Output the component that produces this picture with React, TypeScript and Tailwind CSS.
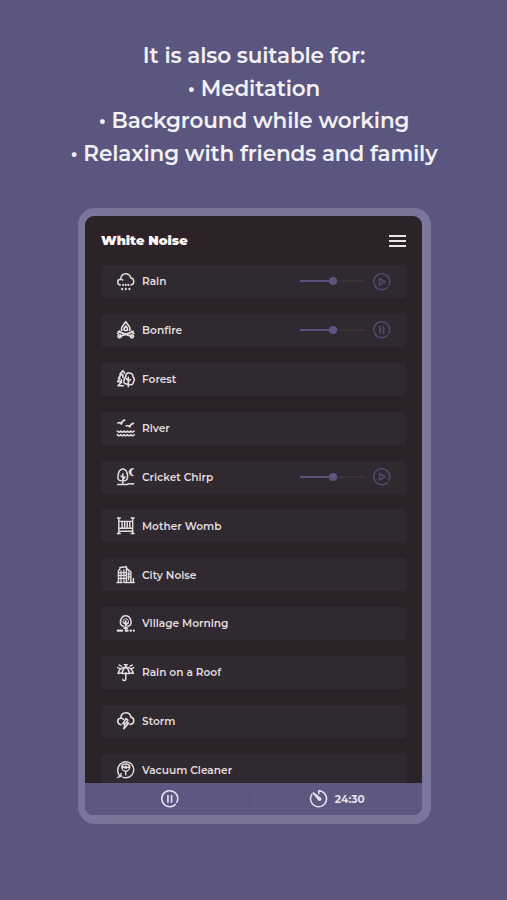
import type { ReactNode } from "react";

function Icon({ children, className = "", width = 1.8 }: { children: ReactNode; className?: string; width?: number }) {
  return (
    <svg
      viewBox="0 0 24 24"
      className={`size-[17.500px] shrink-0 overflow-visible ${className}`}
      fill="none"
      stroke="currentColor"
      strokeWidth={width}
      strokeLinecap="round"
      strokeLinejoin="round"
    >
      {children}
    </svg>
  );
}

const icons = {
  rain: (
    <Icon width={2}>
      <path d="M4.500 16.500C2 16 .8 14 1 12c.2-2 1.800-3.300 3.800-3.400L8 9.500M4.800 8.600C5.500 4 8.500 1 12 1c3.600 0 6 2.200 6.700 5.500 2.600.5 4.300 2.400 4.300 5s-1.400 4.500-4 5" />
      <path d="M8.500 16v.5M12 16v.5M15.500 16v.5M7 21.700v.5M12 21.700v.5M17 21.700v.5" strokeWidth="2.800" />
    </Icon>
  ),
  bonfire: (
    <Icon width={2.200}>
      <path d="M7 13C3.500 9 9 6 12 1c3 5 8.500 8 5 12M12 7c-2.500 2-3 4-1.700 6h3.400c1.300-2 .8-4-1.700-6Z" />
      <path d="m2 14.500 18 6.500M22 14.500 4 21M1 17l3-3M23 17l-3-3" strokeWidth="2.600" />
      <circle cx="3.500" cy="21" r="2.200" />
      <circle cx="20.500" cy="21" r="2.200" />
    </Icon>
  ),
  forest: (
    <Icon width={2.2}>
      <path d="M10.500 4 8 1 4 6h2l-4 5h2l-3 5h4M5 18l-3.500 3.500H9M8 6v4M6 13v4" />
      <path d="M12 19c-3-.8-3.500-3.500-2-5-1-2.500.5-4 2-4.500C11.500 5 15 2.500 17.500 4.500c3-.5 4.500 2 4.500 5 2.500 2.500 2 5.500.5 7 0 3-2.500 4.500-5.500 3.500M15.500 23V10m0 6 3-3m-3 1-3-2M12 19l3 1" />
    </Icon>
  ),
  river: (
    <Icon width={2.200}>
      <path d="M1 5.500c2-1 4-.5 5 1.500C6.500 4 8 2 10.500 1.500M12.500 9.500c2-1 4-.5 5 1.500.5-3 2-4.500 5-5" />
      <path d="M.5 16.500c1.500 2 3 2 4.600 0 1.500 2 3 2 4.600 0 1.500 2 3 2 4.600 0 1.500 2 3 2 4.600 0 1.500 2 3 2 4.600 0M.5 21.500c1.500 2 3 2 4.600 0 1.500 2 3 2 4.600 0 1.500 2 3 2 4.600 0 1.500 2 3 2 4.600 0 1.500 2 3 2 4.600 0" />
    </Icon>
  ),
  cricket: (
    <Icon width={2.100}>
      <path d="M6 17.500c-4 0-5.500-3-4.500-6.500C2 5.500 4 1.500 8 1.500s6 4 6.500 9.500c.5 3.500-1.500 6.500-4.500 6.500M8 22V8m0 8 3-4M8 13l-2.500-2M1 22.500h13c2-2.500 5 .5 9-1" />
      <path d="M22.500 1c-4-.8-6 1.700-6 4.500s2.500 6 6.500 5c-2.500-1-3.500-2.500-3.500-4.500s1-4 3-5Z" fill="currentColor" strokeWidth="1" />
    </Icon>
  ),
  crib: (
    <Icon width={2}>
      <path d="M2.500 1v22M21.500 1v22M.5 1.500h4M19.500 1.500h4M.5 22.500h4M19.500 22.500h4M3 6h18M3 15.500h18M3 19.500h18M7 6v9M10.500 6v9M14 6v9M17.500 6v9" />
    </Icon>
  ),
  city: (
    <Icon width={2}>
      <path d="M2 22V6.500L4 4V2l9-1v21M13 3l6 5v14M0 22.500h7M10 22.500h13.500M22.500 22v-5" />
      <path d="M5.500 6.500v15.500M9.500 5v17M2 9h10M2 13h10M2 17h10M16 8v11M15 11h3M15 15h3" strokeWidth="1.700" />
    </Icon>
  ),
  village: (
    <Icon width={2.200}>
      <path d="M9 15.500C5 15 3.800 11 5 7.500 6 4 8.500 1 12 1s6 3 7 6.500c1.200 3.500 0 7.500-4 8M12 20V8m0 6 3-3m-3 2-3-3" />
      <path d="M8.500 11c-1-3 .5-6 3.500-6s4.500 3 3.500 6" strokeWidth="1.300" />
      <path d="M9.500 18h5" />
      <path d="M1 21.500h6M12 21.500h2.500M18.500 21.500h.5M23 21.500h.1" strokeWidth="3" />
    </Icon>
  ),
  umbrella: (
    <Icon width={2.100}>
      <path d="M1.500 13C2.500 8 6.500 4.500 12 4.500S21.500 8 22.500 13c-2-1-4-1-5.500 0H7c-1.500-1-3.500-1-5.500 0ZM7 13c.5-4 2-7 5-8.500 3 1.500 4.500 4.500 5 8.500M12 12v9c0 2.500-4 2.500-4 0M12 5V2.500M1 5l2.500 1M3 1.500l3 1.500M10 1h4M21 1.500 18 3M23 5l-2.500 1" />
    </Icon>
  ),
  storm: (
    <Icon width={2.200}>
      <path d="M5.500 17.500C2 17 1 14.500 1 12.500 1 10.500 2.500 8.500 5 8.500 5.500 4 8.500 1 12 1c4 0 6.500 2.500 7 6 2.500.3 4 2.500 4 5s-1.800 4.700-5 5M5 8.500c2-.2 3 .5 4 1.500" />
      <path d="m12.500 9-4.500 7h3L9.500 23l6.500-8h-3.500L15 11Z" />
    </Icon>
  ),
  vacuum: (
    <Icon width={2}>
      <path d="M5 21C2.500 19.500 1 16 1 12.500 1 6.500 6 1 12 1s11 5 11 11-5 11-11 11c-1.500 0-3-.3-4-.8M1 22.500l4.500-1.500V17" />
      <path d="M6.500 7.500C7 5 9 4 12 4s5 1 5.500 3.500c0 3-2 6.500-5.500 6.500s-5.500-3.500-5.500-6.500Zm0 0c3 2 8 2 11 0M12 14v5" />
      <circle cx="12" cy="8.500" r="1.300" />
    </Icon>
  ),
};

function PlayerIcon({ playing, className = "" }: { playing?: boolean; className?: string }) {
  return (
    <Icon className={className} width={2.100}>
      <path d="M19.500 20A11 11 0 1 1 23 12.500c-.1 1.800-.6 3.200-1.500 4.500M19.500 20c-1.800 1.700-3.800 2.700-6 3" />
      {playing ? <path d="M9.500 7.500v9M14.500 7.500v9" strokeWidth="2.300" /> : <path d="M9 7.500v9l7.500-4.500Z" />}
    </Icon>
  );
}

type Control = "play" | "pause";
const sounds: { name: string; icon: ReactNode; control?: Control }[] = [
  { name: "Rain", icon: icons.rain, control: "play" },
  { name: "Bonfire", icon: icons.bonfire, control: "pause" },
  { name: "Forest", icon: icons.forest },
  { name: "River", icon: icons.river },
  { name: "Cricket Chirp", icon: icons.cricket, control: "play" },
  { name: "Mother Womb", icon: icons.crib },
  { name: "City Noise", icon: icons.city },
  { name: "Village Morning", icon: icons.village },
  { name: "Rain on a Roof", icon: icons.umbrella },
  { name: "Storm", icon: icons.storm },
  { name: "Vacuum Cleaner", icon: icons.vacuum },
];

function Slider() {
  return (
    <div className="flex w-[65px] items-center">
      <div className="h-[2px] w-[29px] bg-[#57507c]" />
      <div className="size-2 rounded-full bg-[#5d5685]" />
      <div className="h-[2px] flex-1 bg-[#3b3138]" />
    </div>
  );
}

export default function App() {
  return (
    <main className="flex h-[900px] w-[507px] flex-col bg-[#5a567f] font-['Montserrat','Inter',sans-serif] text-[#f3f0f5]">
      <h1 className="flex h-[208px] shrink-0 flex-col items-center pt-[39px] pl-px text-[21.500px] leading-[32.600px] font-semibold tracking-[-0.120px] whitespace-nowrap">
        <span>It is also suitable for:</span>
        <span>• Meditation</span>
        <span>• Background while working</span>
        <span>• Relaxing with friends and family</span>
      </h1>
      <section className="ml-[78px] flex h-[616px] w-[353px] flex-col overflow-hidden rounded-[17px] bg-[#7a759b] pt-2 pr-[9px] pb-[9px] pl-[7px]">
        <div className="flex min-h-0 flex-1 flex-col overflow-hidden rounded-[9px] bg-[#2d2228]">
          <header className="flex h-[49px] shrink-0 items-center justify-between px-4">
            <h2 className="text-[13px] font-black text-[#fbf6f4]">White Noise</h2>
            <button className="flex w-[17px] flex-col gap-[3px]" aria-label="Menu">
              <span className="h-[2px] bg-[#eee5e3]" />
              <span className="h-[2px] bg-[#eee5e3]" />
              <span className="h-[2px] bg-[#eee5e3]" />
            </button>
          </header>
          <ul className="flex min-h-0 flex-1 flex-col gap-[15.880px] overflow-hidden px-4">
            {sounds.map((s) => (
              <li key={s.name} className="flex h-[33px] shrink-0 items-center rounded-[3px] bg-[#30292f] pr-[16px] pb-[0.500px] pl-4 text-[#e2dbdf]">
                {s.icon}
                <span className="ml-[7.500px] pt-[2px] text-[10.600px] font-semibold whitespace-nowrap">{s.name}</span>
                {s.control && (
                  <div className="ml-auto flex items-center gap-[7.500px]">
                    <Slider />
                    <PlayerIcon playing={s.control === "pause"} className="text-[#50486d]" />
                  </div>
                )}
              </li>
            ))}
          </ul>
          <footer className="flex h-8 shrink-0 items-center bg-[#5c5881] text-[#e4e1ee]">
            <div className="flex h-full w-[169px] items-center justify-center">
              <PlayerIcon playing />
            </div>
            <div className="h-4 w-px bg-[#625e87]" />
            <div className="flex flex-1 items-center justify-center gap-[7px] pr-[2px]">
              <Icon width={2.100}>
                <path d="M12 5V1a11 11 0 1 1-9.500 5" />
                <path d="m4.500 4 10 7.500c1 1.500-.8 3-2.500 2Z" fill="currentColor" />
              </Icon>
              <span className="pt-px text-[10.600px] font-bold">24:30</span>
            </div>
          </footer>
        </div>
      </section>
    </main>
  );
}
